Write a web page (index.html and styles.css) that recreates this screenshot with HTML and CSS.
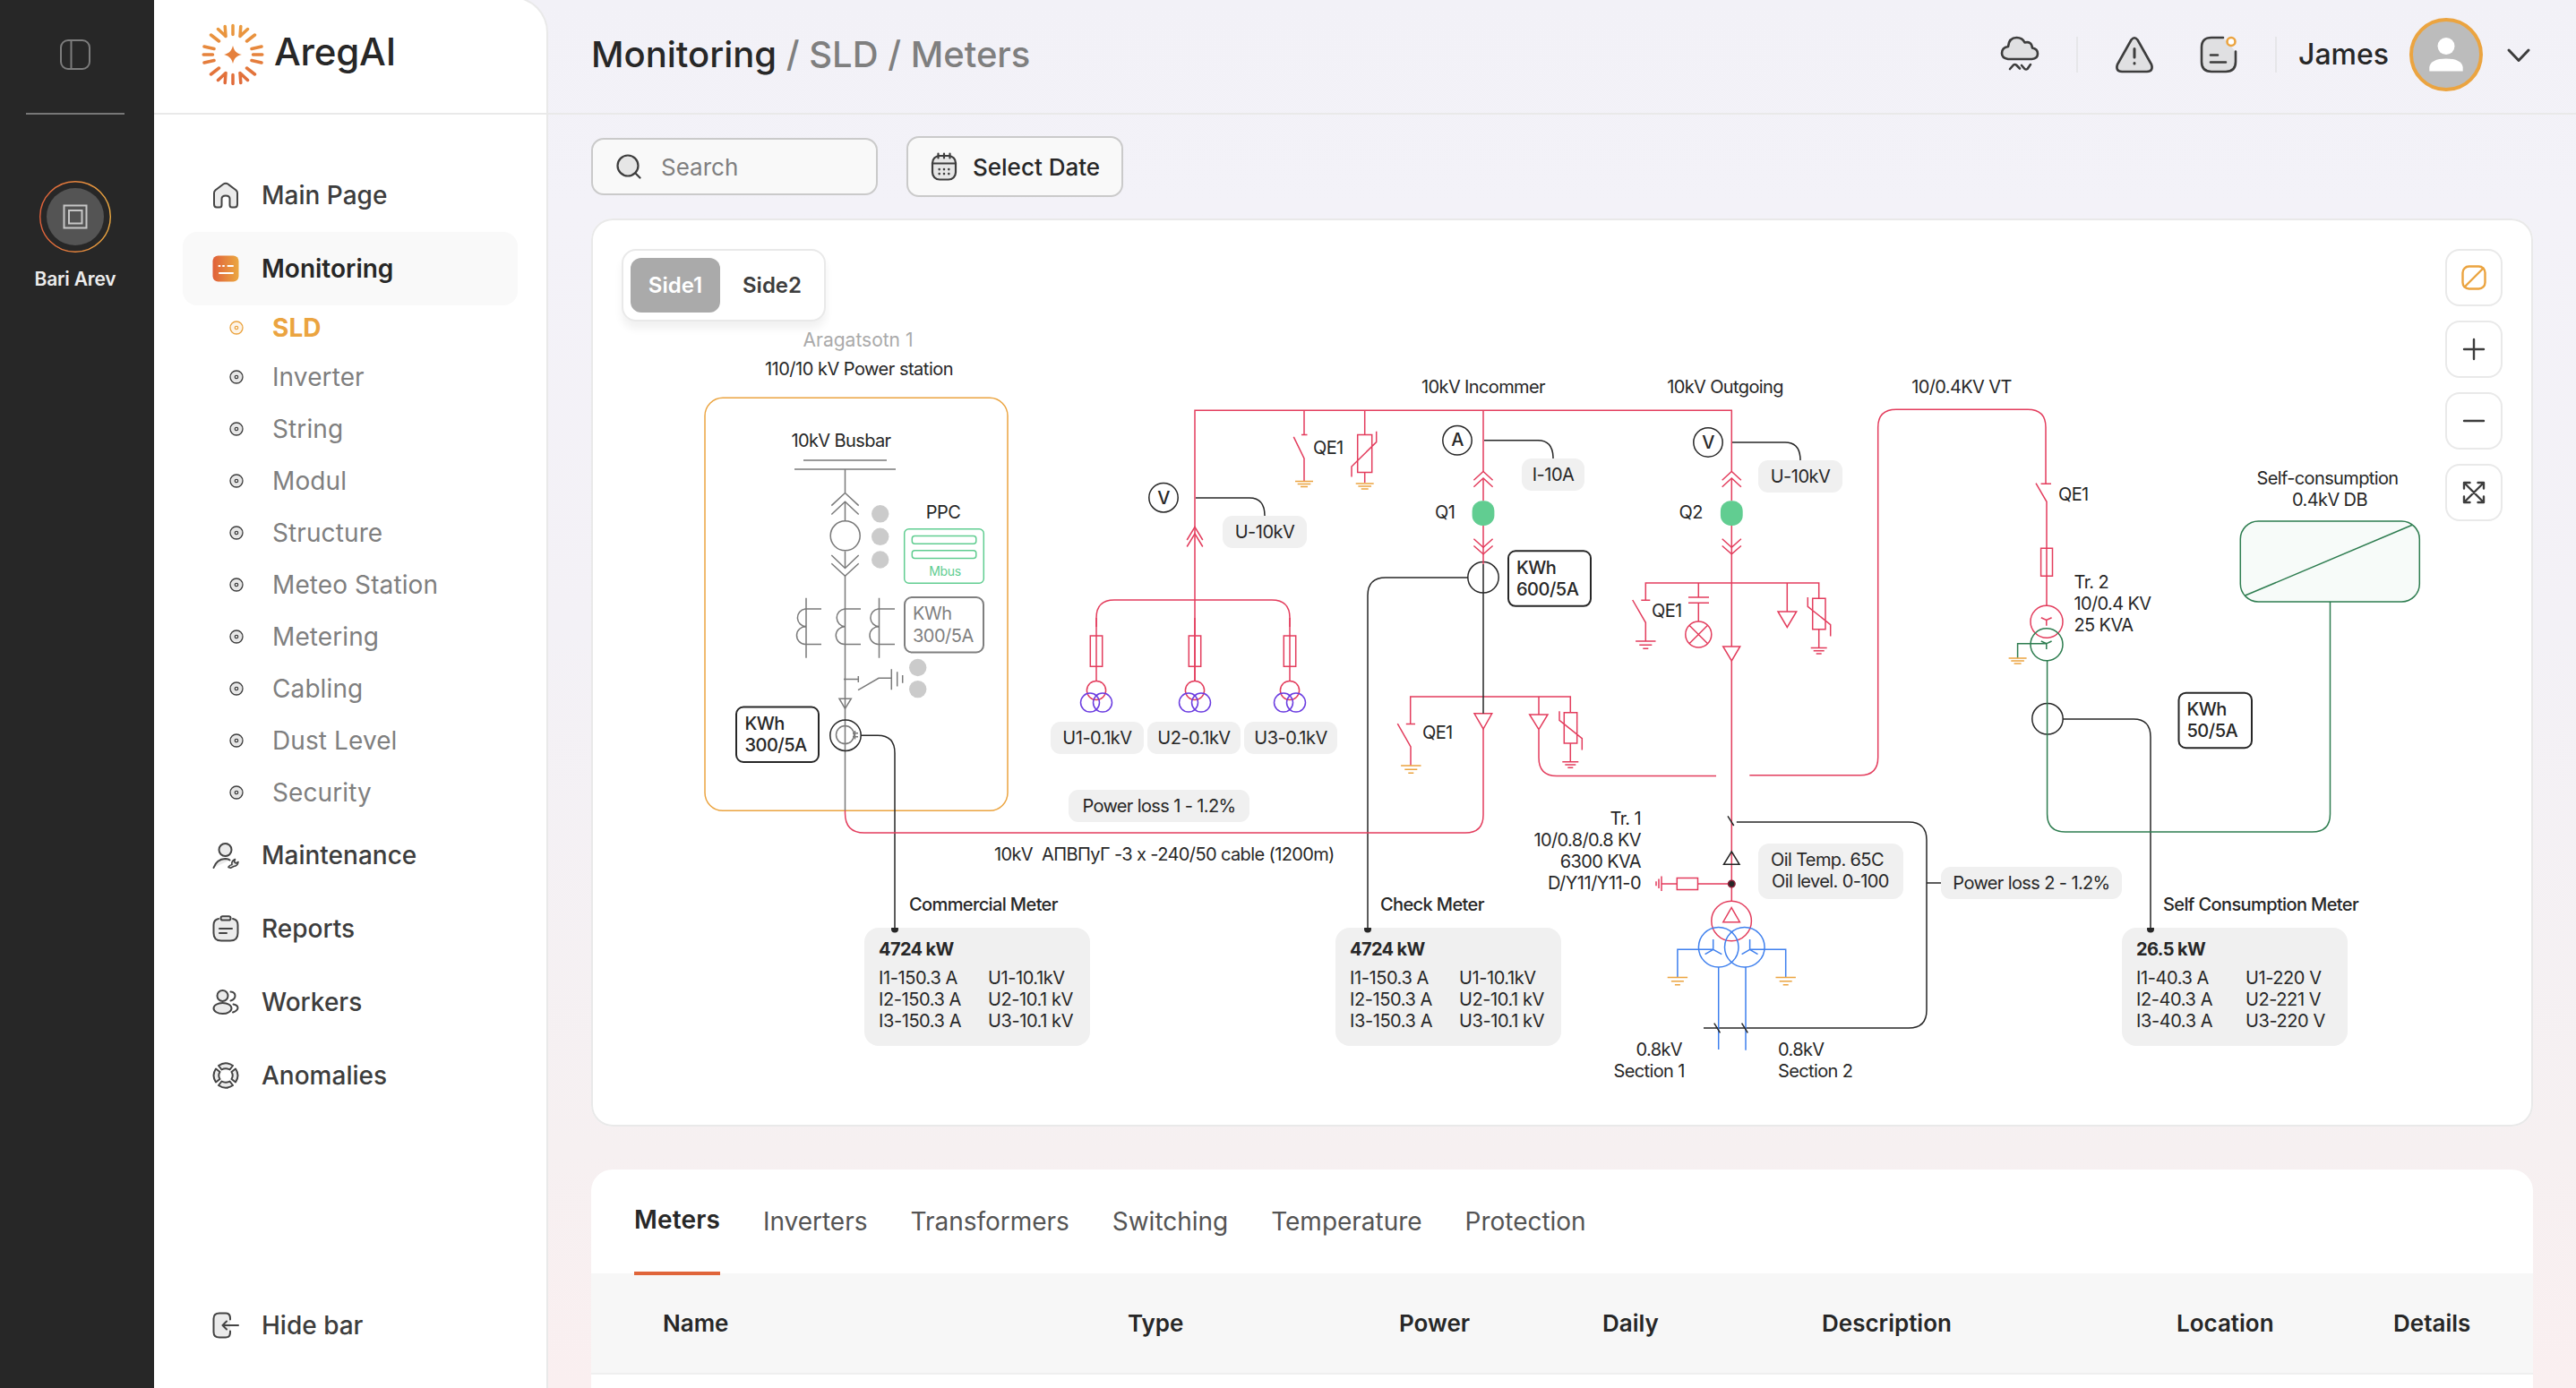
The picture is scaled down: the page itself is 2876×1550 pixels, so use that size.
FILE: index.html
```html
<!DOCTYPE html>
<html lang="en">
<head>
<meta charset="utf-8">
<title>AregAI – Monitoring</title>
<link rel="stylesheet" href="styles.css">
</head>
<body>
<svg class="defs" width="0" height="0" aria-hidden="true">
  <defs>
    <linearGradient id="g-sun-abs" gradientUnits="userSpaceOnUse" x1="0" y1="-35" x2="0" y2="35"><stop offset="0" stop-color="#eb9d3f"/><stop offset="1" stop-color="#e0683a"/></linearGradient>
    <linearGradient id="g-side" x1="0" y1="0" x2="1" y2="0"><stop offset="0" stop-color="#e0603a"/><stop offset="1" stop-color="#eba840"/></linearGradient>
    <symbol id="bullet" viewBox="0 0 16 16"><circle cx="8" cy="8" r="7" fill="currentColor" fill-opacity=".12" stroke="currentColor" stroke-width="1.3"/><circle cx="8" cy="8" r="1.7" fill="#fff" stroke="currentColor" stroke-width="1.3"/></symbol>
  </defs>
</svg>
<div class="app">
  <aside class="rail">
    <div class="rail-top">
      <svg width="36" height="36" viewBox="0 0 36 36" fill="none" stroke="#7d7d7d" stroke-width="2"><rect x="2" y="2" width="32" height="32" rx="8"/><path d="M13.500 2V34"/></svg>
    </div>
    <div class="rail-line"></div>
    <div class="station">
      <svg width="80" height="80" viewBox="0 0 80 80" fill="none"><circle cx="40" cy="40" r="39.300" stroke="url(#g-side)" stroke-width="1.400"/><circle cx="40" cy="40" r="32" fill="#545454"/><path d="M27.500 27.500H52.500V52.500H27.500ZM33 33H47.500V47.500H33Z" stroke="#c6c6c6" stroke-width="2"/></svg>
      <span>Bari Arev</span>
    </div>
  </aside>

  <aside class="sidebar">
    <div class="brand">
      <svg width="72" height="72" viewBox="-36 -36 72 72" stroke="url(#g-sun-abs)" stroke-width="3.500" stroke-linecap="round" fill="none">
        <path d="M.01-32.600 0-22.500M8.800-31.500 8-20.500M16.500-28.500 8-20.500M24.500-22 15.500-15M32-9 21-6.500M32.800-.01 22.500 0M32 9 21 6.500M24.500 22 15.500 15M16.500 28.500 8 20.500M8.800 31.500 8 20.500M.01 32.600 0 22.500M-8.800 31.500-8 20.500M-16.500 28.500-8 20.500M-24.500 22-15.500 15M-32 9-21 6.500M-32.800 .01-22.500 0M-32-9-21-6.500M-24.500-22-15.500-15M-16.500-28.500-8-20.500M-8.800-31.500-8-20.500"/>
        <path d="M0-10C1.500-4 4-1.500 10 0 4 1.500 1.500 4 0 10-1.500 4-4 1.500-10 0-4-1.500-1.500-4 0-10Z" fill="#e5803c" stroke="none"/>
      </svg>
      <span>AregAI</span>
    </div>
    <nav class="menu">
      <a class="item"><svg class="ic" viewBox="0 0 30 30"><path d="M2 12.500Q2 10.500 3.600 9.200L12.500 2.500Q15 .800 17.500 2.500L26.400 9.200Q28 10.500 28 12.500V25Q28 28.500 25 28.500H22Q19.500 28.500 19.500 26V19Q19.500 15.500 15 15.500T10.500 19V26Q10.500 28.500 8 28.500H5Q2 28.500 2 25Z"/></svg>Main Page</a>
      <a class="item active"><svg class="ic" viewBox="0 0 30 30"><rect x=".5" y=".5" width="29" height="29" rx="6" fill="url(#g-side)" stroke="none"/><path d="M7.500 12H8.500M12 12H13M17.500 12H23M8 20H23" stroke="#fff" stroke-width="2"/></svg>Monitoring</a>
      <a class="sub current"><svg class="bullet"><use href="#bullet"/></svg>SLD</a>
      <a class="sub"><svg class="bullet"><use href="#bullet"/></svg>Inverter</a>
      <a class="sub"><svg class="bullet"><use href="#bullet"/></svg>String</a>
      <a class="sub"><svg class="bullet"><use href="#bullet"/></svg>Modul</a>
      <a class="sub"><svg class="bullet"><use href="#bullet"/></svg>Structure</a>
      <a class="sub"><svg class="bullet"><use href="#bullet"/></svg>Meteo Station</a>
      <a class="sub"><svg class="bullet"><use href="#bullet"/></svg>Metering</a>
      <a class="sub"><svg class="bullet"><use href="#bullet"/></svg>Cabling</a>
      <a class="sub"><svg class="bullet"><use href="#bullet"/></svg>Dust Level</a>
      <a class="sub"><svg class="bullet"><use href="#bullet"/></svg>Security</a>
      <a class="item"><svg class="ic" viewBox="0 0 30 30"><circle cx="14.500" cy="9" r="7"/><path d="M1.500 29Q5 19.500 14.500 19 17.500 19 19.500 20.500"/><path d="M18 28.500Q19 26 22 25.500 21 21.500 25.500 19.500L24.500 22.500 26.500 24 29 22.500Q28.500 27 24 27.500L20.500 29.300Z" stroke-width="1.600"/></svg>Maintenance</a>
      <a class="item"><svg class="ic" viewBox="0 0 30 30"><path d="M7 4Q1.500 5 1.500 11V20Q1.500 28.500 10 28.500H20Q28.500 28.500 28.500 20V11Q28.500 5 23 4"/><rect x="9.500" y="1.200" width="11" height="4.300" rx="2.100"/><path d="M8 15H22M8 20H16"/></svg>Reports</a>
      <a class="item"><svg class="ic" viewBox="0 0 30 30"><circle cx="11.500" cy="8" r="6"/><ellipse cx="11.500" cy="22" rx="10" ry="6"/><path d="M20.500 3.500Q25.500 4 25.500 8T20.500 13.500M23.500 17.500Q28.500 18.500 28.500 21.500T23 26.500" fill="none"/></svg>Workers</a>
      <a class="item"><svg class="ic" viewBox="0 0 30 30"><path d="M7 4Q15-1.500 23 4L19.500 8.500Q15 6 10.500 8.500Z"/><path d="M7 26Q15 31.500 23 26L19.500 21.500Q15 24 10.500 21.500Z"/><path d="M4 7.500Q-1 15 4 22.500L8.500 19Q6 15 8.500 11Z"/><path d="M26 7.500Q31 15 26 22.500L21.500 19Q24 15 21.500 11Z"/></svg>Anomalies</a>
    </nav>
    <a class="item hide"><svg class="ic" viewBox="0 0 30 30"><path d="M20 8.500V7Q20 1.500 15 1.500H8Q1.500 1.500 1.500 7.500V22.500Q1.500 28.500 8 28.500H15Q20 28.500 20 23V21.500"/><path d="M29 15H12M16 10.500 11.500 15 16 19.500" fill="none"/></svg>Hide bar</a>
  </aside>

  <main class="main">
    <header class="topbar">
      <h1>Monitoring <span>/ SLD / Meters</span></h1>
      <div class="tools">
        <svg class="t-ic" width="44" height="44" viewBox="0 0 44 44"><path d="M9 27Q2 26 2 20.500 2 14 9 13 10 3 18.500 3 25 3 27.500 8.500 35 6.500 36 14.500 42 15.500 42 21T35.500 27Z"/><path d="M11 38 15 33.500Q16.500 32.500 18 33.500L22 37.500M24 34 27.500 38Q29 39 30.500 38L34 33" fill="none"/></svg>
        <i class="sep"></i>
        <svg class="t-ic alert" width="44" height="44" viewBox="0 0 44 44"><path d="M18.500 5.500Q22 1 25.500 5.500L41 33Q43.500 40.500 36 41H8Q.5 40.500 3 33Z"/><path d="M22 15.500V25M22 31.500V32" stroke-width="3"/></svg>
        <svg class="t-ic note" width="44" height="44" viewBox="0 0 44 44"><path d="M27 3H14Q3 3 3 14V30Q3 41 14 41H30Q41 41 41 30V18.500"/><path d="M13 22.500H21M13 30.500H30"/><circle cx="36" cy="7.500" r="4.500" fill="#fff" stroke="#eba440"/></svg>
        <i class="sep"></i>
        <span class="user">James</span>
        <svg class="avatar" width="82" height="82" viewBox="0 0 82 82"><circle cx="41" cy="41" r="39" fill="#bcbcbc" stroke="#eba440" stroke-width="4"/><circle cx="41" cy="31.500" r="9.500" fill="#fff"/><path d="M22.300 59.500V55Q24 45.500 41 45.500T59.700 55V59.500Z" fill="#fff"/></svg>
        <svg class="chev" width="28" height="28" viewBox="0 0 28 28" fill="none" stroke="#3d3d3d" stroke-width="3" stroke-linecap="round" stroke-linejoin="round"><path d="M3 9 14 20.500 25 9"/></svg>
      </div>
    </header>

    <div class="filters">
      <label class="search"><svg width="28" height="28" viewBox="0 0 28 28" fill="#e6e6e6" stroke="#3d3d3d" stroke-width="2.200" stroke-linecap="round"><circle cx="13" cy="13" r="11.500"/><path d="M21.500 21.500 26.500 26.500"/></svg>Search</label>
      <button class="date"><svg width="30" height="32" viewBox="0 0 30 32" fill="#e6e6e6" stroke="#3d3d3d" stroke-width="2.200" stroke-linecap="round"><rect x="2" y="4" width="26" height="26.500" rx="8"/><path d="M2 12.500H28M8.500 1.500V6.500M15 1.500V6.500M21.500 1.500V6.500"/><path d="M9.700 19V19.100M15 19V19.100M20.300 19V19.100M9.700 24V24.100M15 24V24.100M20.300 24V24.100" stroke-width="2.600"/></svg>Select Date</button>
    </div>

    <section class="scheme">
      <svg class="diagram" width="2168" height="1014" viewBox="660 244 2168 1014">
        <defs>
          <clipPath id="below"><rect x="660" y="1036" width="2168" height="100"/></clipPath>
          <path id="gnd" d="M-10 0H10M-7.300 3H7.300M-4 6H4"/>
          <path id="gnd-l" d="M-11.200 0H11.200M-7 4.200H7M-3 8.300H3"/>
          <path id="gnd-s" d="M-9 0H9M-6 3.300H6M-3 6.600H3"/>
          <g id="breaker-r"><path d="M-10.600 10 0 .3 10.600 10M-10.600 17.500 0 7.700 10.600 17.500M-10.600 75.500 0 85 10.600 75.500M-10.600 83.300 0 92.500 10.600 83.300"/><path d="M0 7.700V33M0 60V85"/><rect x="-12.400" y="33" width="24.800" height="27.700" rx="11.500" fill="#61cd91" stroke="none"/></g>
          <g id="coil"><circle r="10.600" cy="771"/><path d="M0 690V760.300M-6.700 710H6.700V744.300H-6.700Z"/><g stroke="#6a3be0"><circle cx="-7" cy="784.600" r="10.500"/><circle cx="7" cy="784.600" r="10.500"/></g></g>
        </defs>

        <!-- substation frame -->
        <g class="amber"><rect x="787" y="444.300" width="338" height="461" rx="20"/></g>

        <!-- substation internals -->
        <g class="grey">
          <path d="M897 514H990M887 524H1000M943.500 524V550M943.500 560V581M943.500 615.500V634M943.500 643V905"/>
          <path d="M928.300 564.600 943.500 550.500 958.700 564.600M928.300 574.500 943.500 560.300 958.700 574.500M928.300 620 943.500 634.500 958.700 620M928.300 629.300 943.500 643.300 958.700 629.300"/>
          <circle cx="943.700" cy="598.300" r="16.500"/>
          <path d="M900 667.800V734.700M917 680H899A10 9.900 0 0 0 900 699.700 10 9.900 0 0 0 899 719.500H917"/>
          <path d="M961 680H943A10 9.900 0 0 0 943.500 699.700 10 9.900 0 0 0 943 719.500H961"/>
          <path d="M981.500 667.800V734.700M999 680H980.500A10 9.900 0 0 0 981.500 699.700 10 9.900 0 0 0 980.500 719.500H999"/>
          <path d="M942 758.500H958.300M958.300 755V762M958 770.600 981 757.300H995.300M995.300 747.300V770.200M1001.700 750.300V766.500M1007.700 754V762.800"/>
          <path d="M937 780.200H950.300L943.500 791.300Z"/>
          <circle cx="943.500" cy="820.600" r="10"/>
          <path d="M952 818.700H958M952 822.800H958M954.500 816V825.500"/>
        </g>
        <g fill="#cbcbcb"><circle cx="982.700" cy="573.800" r="9.700"/><circle cx="982.700" cy="599.300" r="9.700"/><circle cx="982.700" cy="625" r="9.700"/><circle cx="1024.700" cy="745.500" r="9.700"/><circle cx="1024.700" cy="769.600" r="9.700"/></g>
        <g class="mint"><rect x="1009.700" y="590.800" width="88.600" height="60.400" rx="5"/><rect x="1018.300" y="598.500" width="71.500" height="8.800" rx="3"/><rect x="1018.300" y="614.700" width="71.500" height="8.800" rx="3"/></g>

        <!-- black meter leads -->
        <g class="ink">
          <circle cx="944" cy="821.200" r="17.200"/>
          <path d="M961.300 821.300H980Q999 821.300 999 841V1037"/>
          <path d="M1335 556H1395Q1412 556 1412 576"/>
          <path d="M1657 491.800H1717Q1734 491.800 1734 512"/>
          <path d="M1934 494H1993Q2010 494 2010 514"/>
          <path d="M1639 645H1547Q1527 645 1527 665V1037"/>
          <path d="M2303.300 803H2382Q2401 803 2401 823V1037"/>
          <path d="M1938.800 918H2131Q2151 918 2151 938V1128Q2151 1148 2131 1148H1902M2151 986H2168"/>
          <circle cx="1656" cy="644.800" r="17.200"/>
          <circle cx="2286" cy="802.800" r="17.200"/>
          <circle cx="1299" cy="555.700" r="16.200"/><circle cx="1627" cy="491.800" r="16.200"/><circle cx="1907" cy="494" r="16.200"/>
        </g>

        <!-- 10kV circuit -->
        <g class="red">
          <path d="M943.500 905V908Q943.500 930 965 930H1636Q1656 930 1656 910V814"/>
          <path d="M1334 760V458.300H1933.300V527M1656 458V527"/>
          <path d="M1456 458V485.400M1453 485.400H1459.500M1444.300 487.900 1456 511.800V537"/>
          <path d="M1523.700 458V485.400M1515.700 485.400H1531.700V527.500H1515.700ZM1523.700 527.500V539M1536.700 481.800V493.600L1509 521V532.500"/>
          <path d="M1325.200 603 1334 588.500 1342.800 603M1325.200 610.500 1334 596 1342.800 610.500"/>
          <path d="M1224 700V690Q1224 670 1244 670H1420Q1440 670 1440 690V700"/>
          <use href="#coil" x="1224"/><use href="#coil" x="1334"/><use href="#coil" x="1440"/>
          <use href="#breaker-r" x="1656" y="526.200"/><use href="#breaker-r" x="1933.300" y="526.200"/>
          <path d="M1656 611V630M1933.300 611V722"/>
          <path d="M1574.700 808.600V778H1753.300V795.700M1569.800 808.600H1580M1560.300 808.200 1575 834V855"/>
          <path d="M1646 796.800H1665.700L1656 814ZM1718 778V797.900M1707.700 797.900H1728L1718 814.600ZM1718 814.600V846Q1718 866.500 1738 866.500H1916"/>
          <path d="M1746.300 795.700H1760.700V830H1746.300ZM1753.300 830V850.700M1741 794.300V804.300L1766.300 824.600V837.500"/>
          <use href="#gnd-s" x="1753.300" y="850.700"/>
          <path d="M1837.300 670.300V651H2030.700V668.300M1832.300 670.300H1842.300M1822.700 670 1837.300 695.300V716"/>
          <use href="#gnd-l" x="1837.300" y="716"/>
          <path d="M1896.300 651V667M1885 667H1908M1885 673.300H1908M1896.300 673.300V694M1886 698.200 1906.600 718.800M1906.600 698.200 1886 718.800"/>
          <circle cx="1896.300" cy="708.500" r="14.500"/>
          <path d="M1995.300 651V683M1985 683H2005.700L1995.300 700.500ZM1923.700 722H1942.700L1933.300 738Z"/>
          <path d="M2023.700 668.300H2038V702.700H2023.700ZM2030.700 702.700V723.300M2018.300 667V677.300L2043.700 697.700V710.500"/>
          <use href="#gnd-s" x="2030.700" y="723.500"/>
          <path d="M1933.300 738V1006M1953.300 865.700H2077Q2096.700 865.700 2096.700 845.700V477.300Q2096.700 457.300 2117 457.300H2264Q2284 457.300 2284 477.300V540"/>
          <path d="M2278.600 540.300H2290M2273 539.700 2285 560.300V676M2278.600 612.300H2291.500V643.300H2278.600Z"/>
          <circle cx="2285" cy="694.200" r="18"/>
          <path d="M2278.800 689.700 2284.800 692.500 2290.600 689.700M2284.800 692.500V698.700"/>
          <path d="M1933.300 987H1895.500M1872.300 980.500H1895.500V993.500H1872.300ZM1872.300 987H1855M1855 978.500V995M1852 981.500V992M1849 984.300V989.300"/>
          <circle cx="1933.100" cy="1028.500" r="22.300"/><path d="M1933.100 1013.500 1923.800 1029.700H1942.400Z"/>
        </g>
        <g class="ink"><path d="M1656 630V796.800M1933.300 951 1924.500 965.300H1942ZM1929 911.300 1935.700 922"/><circle cx="1933.300" cy="987" r="3.800" fill="#272727" stroke="#8a2038"/></g>

        <!-- 0.8kV windings -->
        <g class="blue">
          <circle cx="1918.700" cy="1057.800" r="22.300"/><circle cx="1947.800" cy="1057.800" r="22.300"/>
          <path d="M1872.900 1091V1060.300H1912.700V1049M1903.600 1065.700 1912.700 1060.300 1922.300 1065.700M1993.700 1091V1060.300H1953.600V1049M1944.600 1065.700 1953.600 1060.300 1962.500 1065.700M1918.700 1080V1172M1949 1080V1172.700"/>
        </g>
        <path class="ink" d="M1913.800 1142.700 1920.500 1153.300M1944.600 1142.700 1951.300 1153.300"/>

        <!-- self consumption -->
        <g class="green">
          <circle cx="2285" cy="719.700" r="18"/>
          <path d="M2252.600 735V718.700H2285M2278.800 716 2284.800 718.700 2290.600 716M2284.800 718.700V725"/>
          <path d="M2285.600 738V909Q2285.600 929 2306 929H2581.500Q2601.500 929 2601.500 909V672"/>
          <rect x="2501.300" y="582" width="200" height="90" rx="20" fill="#f7fbf9"/><path d="M2506 665.300 2693.200 586.300"/>
        </g>

        <g class="amber">
          <use href="#gnd" x="1456" y="537.500"/><use href="#gnd" x="1523.700" y="540"/>
          <use href="#gnd-l" x="1575.300" y="855"/><use href="#gnd" x="2252.600" y="735"/>
          <use href="#gnd-l" x="1872.900" y="1091.500"/><use href="#gnd-l" x="1993.700" y="1091.500"/>
        </g>

        <!-- value badges -->
        <g fill="#f0f0f0">
          <rect x="1365" y="576" width="94" height="36" rx="11"/><rect x="1699" y="512" width="70" height="36" rx="11"/><rect x="1963" y="514" width="94" height="36" rx="11"/>
          <rect x="1173" y="806" width="104" height="36" rx="11"/><rect x="1281" y="806" width="104" height="36" rx="11"/><rect x="1389" y="806" width="104" height="36" rx="11"/>
          <rect x="1193" y="882" width="202" height="36" rx="11"/><rect x="1963" y="942" width="162" height="62" rx="12"/><rect x="2167" y="968" width="202" height="36" rx="11"/>
          <rect x="965" y="1036" width="252" height="132" rx="16"/><rect x="1491" y="1036" width="252" height="132" rx="16"/><rect x="2369" y="1036" width="252" height="132" rx="16"/>
        </g>
        <g fill="#272727" clip-path="url(#below)"><circle cx="999" cy="1037.500" r="4"/><circle cx="1527" cy="1037.500" r="4"/><circle cx="2401" cy="1037.500" r="4"/></g>
        <g class="ratio"><rect x="822" y="789.500" width="92" height="61.500" rx="8"/><rect x="1684" y="615.300" width="92" height="61.500" rx="8"/><rect x="2432.500" y="773.700" width="81.500" height="61.500" rx="8"/><rect x="1010" y="667" width="88" height="61.500" rx="8" stroke="#7f7f7f"/></g>

        <!-- labels -->
        <g class="txt">
          <text x="958" y="387" class="mid station-name">Aragatsotn 1</text>
          <text x="959" y="419" class="mid wide">110/10 kV Power station</text>
          <text x="939" y="499" class="mid">10kV Busbar</text>
          <text x="1053" y="579" class="mid">PPC</text>
          <text x="1055" y="643" class="mid mbus">Mbus</text>
          <g fill="#7f7f7f" class="wide"><text x="1019" y="692">KWh</text><text x="1019" y="716.500">300/5A</text></g>
          <g class="m wide"><text x="831.500" y="815">KWh</text><text x="831.500" y="839">300/5A</text><text x="1693" y="640.500">KWh</text><text x="1693" y="664.500">600/5A</text><text x="2441.500" y="799">KWh</text><text x="2441.500" y="823">50/5A</text>
          <text x="1299" y="563" class="mid">V</text><text x="1627" y="498" class="mid">A</text><text x="1907" y="501" class="mid">V</text></g>
          <text x="1466" y="507">QE1</text><text x="1588" y="824.500">QE1</text><text x="1844" y="689">QE1</text><text x="2298" y="559">QE1</text>
          <g class="wide"><text x="1412" y="600.500" class="mid">U-10kV</text><text x="1734" y="537" class="mid">I-10A</text><text x="2010" y="539" class="mid">U-10kV</text>
          <text x="1225" y="830.500" class="mid">U1-0.1kV</text><text x="1333" y="830.500" class="mid">U2-0.1kV</text><text x="1441" y="830.500" class="mid">U3-0.1kV</text></g>
          <text x="1294" y="907" class="mid">Power loss 1 - 1.2%</text><text x="2268" y="993" class="mid">Power loss 2 - 1.2%</text>
          <text x="1110" y="961" xml:space="preserve">10kV  АПВПуГ -3 x -240/50 cable (1200m)</text>
          <text x="1656" y="438.500" class="mid">10kV Incommer</text><text x="1926" y="439" class="mid">10kV Outgoing</text><text x="2190" y="439" class="mid">10/0.4KV VT</text>
          <text x="1602" y="579">Q1</text><text x="1874.500" y="579">Q2</text>
          <text x="2315.500" y="657">Tr. 2</text><text x="2315.500" y="681">10/0.4 KV</text><text x="2315.500" y="705">25 KVA</text>
          <text x="2598.500" y="541" class="mid">Self-consumption</text><text x="2601" y="565" class="mid">0.4kV DB</text>
          <g class="end"><text x="1832" y="921">Tr. 1</text><text x="1832" y="945">10/0.8/0.8 KV</text><text x="1832" y="969">6300 KVA</text><text x="1832" y="993" class="wide">D/Y11/Y11-0</text></g>
          <text x="1977" y="967">Oil Temp. 65C</text><text x="1978" y="991">Oil level. 0-100</text>
          <text x="1826.500" y="1179">0.8kV</text><text x="1801.500" y="1203">Section 1</text><text x="1985" y="1179">0.8kV</text><text x="1985" y="1203">Section 2</text>
          <g class="m"><text x="1015" y="1017">Commercial Meter</text><text x="1541" y="1017">Check Meter</text><text x="2415" y="1017">Self Consumption Meter</text></g>
          <g class="b"><text x="981" y="1067">4724 kW</text><text x="1507" y="1067">4724 kW</text><text x="2385" y="1067">26.5 kW</text></g>
          <g class="readings">
          <text x="981" y="1099">I1-150.3 A</text><text x="981" y="1123">I2-150.3 A</text><text x="981" y="1147">I3-150.3 A</text>
          <text x="1103" y="1099">U1-10.1kV</text><text x="1103" y="1123">U2-10.1 kV</text><text x="1103" y="1147">U3-10.1 kV</text>
          <text x="1507" y="1099">I1-150.3 A</text><text x="1507" y="1123">I2-150.3 A</text><text x="1507" y="1147">I3-150.3 A</text>
          <text x="1629" y="1099">U1-10.1kV</text><text x="1629" y="1123">U2-10.1 kV</text><text x="1629" y="1147">U3-10.1 kV</text>
          <text x="2385" y="1099">I1-40.3 A</text><text x="2385" y="1123">I2-40.3 A</text><text x="2385" y="1147">I3-40.3 A</text>
          <text x="2507" y="1099">U1-220 V</text><text x="2507" y="1123">U2-221 V</text><text x="2507" y="1147">U3-220 V</text>
          </g>
        </g>
      </svg>
      <div class="sides"><button class="on">Side1</button><button>Side2</button></div>
      <div class="zoom">
        <button><svg viewBox="0 0 28 28"><rect x="1.500" y="1.500" width="25" height="25" rx="7"/><path d="M3.500 24.500 24.500 3.500"/></svg></button>
        <button><svg viewBox="0 0 28 28"><path d="M14 3V25M3 14H25"/></svg></button>
        <button><svg viewBox="0 0 28 28"><path d="M3 14H25"/></svg></button>
        <button><svg viewBox="0 0 28 28"><path d="M3 3 25 25M25 3 3 25M3 9.500V3H9.500M18.500 3H25V9.500M25 18.500V25H18.500M9.500 25H3V18.500"/></svg></button>
      </div>
    </section>

    <section class="table-card">
      <div class="tabs"><a class="on">Meters</a><a>Inverters</a><a>Transformers</a><a>Switching</a><a>Temperature</a><a>Protection</a></div>
      <div class="thead"><span>Name</span><span>Type</span><span>Power</span><span>Daily</span><span>Description</span><span>Location</span><span>Details</span></div>
      <div class="tbody"></div>
    </section>
  </main>
</div>
</body>
</html>
```
FILE: styles.css
```css
* { box-sizing: border-box; }
html, body { margin: 0; }
body {
  width: 2876px;
  height: 1550px;
  overflow: hidden;
  font-family: Inter, "Noto Sans", sans-serif;
  color: #272727;
  background: linear-gradient(180deg, #f2f1f7 0%, #f3f2f8 15%, #f3f1f6 45%, #f6f0f1 83%, #faeff0 100%);
}
button { font: inherit; color: inherit; margin: 0; padding: 0; }
.defs { position: absolute; }
.app { display: flex; height: 1550px; }

/* dark rail */
.rail { width: 172px; flex: none; background: #272727; display: flex; flex-direction: column; align-items: center; padding-right: 4px; }
.rail-top { height: 126px; padding-top: 43px; }
.rail-line { width: 110px; height: 2px; background: #777; }
.station { margin-top: 74px; display: flex; flex-direction: column; align-items: center; gap: 17px; color: #ececec; font-size: 21px; font-weight: 600; line-height: 26px; letter-spacing: -.2px; }

/* sidebar */
.sidebar { width: 440px; flex: none; display: flex; flex-direction: column; background: #fff; border: 2px solid #e9e9e9; border-left: 0; border-bottom: 0; border-radius: 0 40px 0 0; margin-top: -4px; }
.brand { height: 130px; flex: none; margin-right: -2px; border-bottom: 2px solid #e9e9e9; display: flex; align-items: center; padding-left: 52px; gap: 10px; font-size: 42px; font-weight: 500; letter-spacing: -.2px; }
.brand span { padding-bottom: 10px; }
.brand svg { margin-bottom: 3px; }
.menu { padding-top: 48.5px; display: flex; flex-direction: column; }
.item { height: 82px; flex: none; margin: 0 32px; padding-left: 33px; display: flex; align-items: center; gap: 25px; border-radius: 16px; font-size: 28px; font-weight: 500; color: #3d3d3d; }
.item.active { background: #f9f9f9; font-weight: 600; color: #272727; }
.ic { width: 30px; height: 30px; flex: none; fill: #ebebeb; stroke: #444; stroke-width: 2; stroke-linecap: round; stroke-linejoin: round; }
.sub { height: 58px; flex: none; padding-left: 84px; display: flex; align-items: center; gap: 32px; font-size: 28px; letter-spacing: .1px; color: #7f7f7f; }
.sub.current { height: 51.5px; color: #eba440; font-weight: 700; }
.bullet { width: 16px; height: 16px; color: #3d3d3d; }
.current .bullet { color: #eba440; }
.hide { margin-top: auto; margin-bottom: 29px; }

/* main column */
.main { flex: 1; min-width: 0; }
.topbar { height: 128px; border-bottom: 2px solid #e9e9e9; padding: 0 50px 5px 48px; display: flex; align-items: center; justify-content: space-between; }
h1 { margin: 0; font-size: 40px; font-weight: 500; }
h1 span { color: #7f7f7f; }
.tools { display: flex; align-items: center; }
.t-ic { fill: #e0e0e2; stroke: #3d3d3d; stroke-width: 2.6; stroke-linecap: round; stroke-linejoin: round; }
.sep { width: 2px; height: 40px; background: #e6e6e9; margin: 0 41px; }
.note { margin-left: 50px; }
.user { font-size: 32px; font-weight: 500; margin-left: -17px; }
.avatar { margin: 0 26px 0 23px; }

.filters { display: flex; align-items: center; gap: 32px; height: 68px; margin: 24px 48px 24px; }
.search, .date { display: flex; align-items: center; background: #f9f9f9; border: 2px solid #cacaca; border-radius: 14px; font-size: 26px; }
.search { width: 320px; height: 64px; padding-left: 26px; gap: 22px; color: #7f7f7f; }
.date { width: 242px; height: 68px; padding-left: 25px; gap: 17px; font-weight: 500; }

.scheme { position: relative; width: 2168px; height: 1014px; margin-left: 48px; background: #fff; border-radius: 24px; box-shadow: inset 0 0 0 2px #e9e9e9; }
.diagram { display: block; fill: none; stroke-width: 1.5; }
.amber { stroke: #eba440; }
.grey { stroke: #7a7a7a; }
.mint { stroke: #61cd91; }
.ink { stroke: #272727; }
.red { stroke: #e33d5d; }
.blue { stroke: #3f80ee; }
.green { stroke: #2e7d50; }
.ratio { stroke: #272727; stroke-width: 2; fill: #fff; }
.txt { fill: #272727; font-size: 20px; letter-spacing: -.62px; }
.wide { letter-spacing: -.5px; }
.readings { letter-spacing: -.42px; }
.m { font-weight: 500; }
.b { font-weight: 700; }
.mid { text-anchor: middle; }
.end { text-anchor: end; }
.station-name { fill: #aaa; font-size: 21px; letter-spacing: 0; }
.mbus { fill: #61cd91; font-size: 14px; letter-spacing: -.4px; }

.sides { position: absolute; left: 34px; top: 34px; width: 228px; height: 81px; padding: 8px; display: flex; gap: 8px; background: #fff; border: 2px solid #e9e9e9; border-radius: 16px; box-shadow: 0 8px 10px rgba(0, 0, 0, .06); font-size: 24px; font-weight: 600; }
.sides button { width: 100px; height: 61px; border: 0; border-radius: 12px; background: none; color: #3d3d3d; }
.sides .on { background: #aaa; color: #fff; }
.zoom { position: absolute; right: 34px; top: 34px; display: flex; flex-direction: column; gap: 16px; }
.zoom button { width: 64px; height: 64px; border: 2px solid #e9e9e9; border-radius: 16px; background: #fff; display: grid; place-items: center; }
.zoom svg { width: 28px; height: 28px; fill: none; stroke: #3d3d3d; stroke-width: 2.4; stroke-linecap: round; stroke-linejoin: round; }
.zoom button:first-child svg { stroke: #eba440; }

.table-card { width: 2168px; height: 260px; margin: 48px 0 0 48px; background: #fff; border-radius: 24px 24px 0 0; }
.tabs { height: 118px; margin-bottom: -2px; padding-left: 48px; display: flex; gap: 48px; font-size: 28px; color: #545454; }
.tabs a { line-height: 34px; padding-top: 41px; letter-spacing: -.02px; }
.tabs .on { position: relative; padding-top: 39px; font-weight: 600; color: #272727; border-bottom: 4px solid #e0653a; letter-spacing: .15px; }
.thead { height: 113px; background: #f7f7f7; border-bottom: 2px solid #efefef; display: grid; grid-template-columns: 519px 303px 227px 245px 396px 242px 1fr; align-items: center; padding-left: 80px; font-size: 26px; font-weight: 600; }
```
